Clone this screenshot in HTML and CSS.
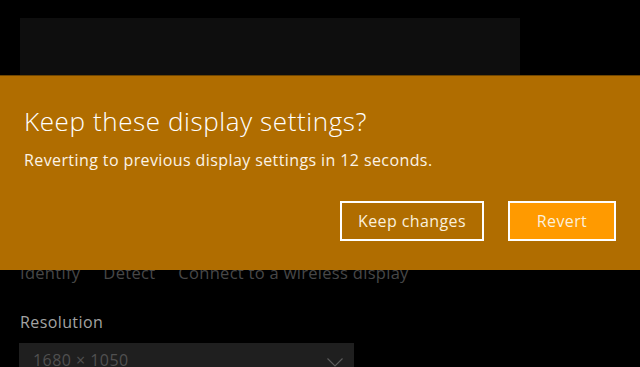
FILE: index.html
```html
<!DOCTYPE html>
<html>
<head>
<meta charset="utf-8">
<link rel="stylesheet" href="styles.css">
</head>
<body>
<div class="page">
  <div class="preview"></div>
  <div class="hidden-area"></div>
  <div class="links">
    <span>Identify</span>
    <span>Detect</span>
    <span>Connect to a wireless display</span>
  </div>
  <div class="label">Resolution</div>
  <div class="select">
    <span class="select-value">1680 × 1050</span>
    <svg class="chev" width="16" height="9" viewBox="0 0 16 9"><path d="M0.5 0.5 L8 8 L15.5 0.5" fill="none" stroke="#5c5c5c" stroke-width="1.1"/></svg>
  </div>
</div>
<div class="banner">
  <h1 class="title">Keep these display settings?</h1>
  <p class="msg">Reverting to previous display settings in 12 seconds.</p>
  <div class="actions">
    <button class="btn btn-keep">Keep changes</button>
    <button class="btn btn-revert">Revert</button>
  </div>
</div>
</body>
</html>
```

FILE: styles.css
```css
html, body {
  margin: 0;
  padding: 0;
  background: #000;
  width: 640px;
  height: 367px;
  overflow: hidden;
  font-family: "Open Sans", "Noto Sans", sans-serif;
}
.page {
  padding: 18px 0 0 20px;
}
.preview {
  width: 500px;
  height: 58px;
  background: #0e0e0e;
}
.hidden-area {
  height: 186px;
}
.links {
  display: flex;
  gap: 23px;
  color: #474747;
  font-size: 16.5px;
  letter-spacing: 0.3px;
  line-height: 22px;
}
.label {
  margin-top: 27px;
  color: #a3a3a3;
  font-size: 16px;
  letter-spacing: 0.4px;
  line-height: 22px;
}
.select {
  margin: 10px 0 0 -1px;
  width: 335px;
  height: 40px;
  background: #1f1f1f;
  display: flex;
  align-items: flex-start;
  justify-content: space-between;
  box-sizing: border-box;
  padding: 6px 11px 0 14px;
  color: #505050;
  font-size: 16px;
  letter-spacing: 0.45px;
  line-height: 22px;
}
.chev {
  margin-top: 9px;
}
.banner {
  position: absolute;
  left: 0;
  top: 75px;
  width: 640px;
  height: 195px;
  box-sizing: border-box;
  background: #b06d00;
  border-top: 1px solid #704600;
  padding: 28px 24px 0 24px;
  color: #fff;
}
.title {
  margin: 0;
  font-weight: 300;
  font-size: 26px;
  letter-spacing: 0.6px;
  line-height: 34px;
}
.msg {
  margin: 11px 0 0 0;
  font-size: 16px;
  letter-spacing: 0.4px;
  line-height: 22px;
  color: #fbf3e6;
}
.actions {
  display: flex;
  justify-content: flex-end;
  gap: 24px;
  margin-top: 30px;
}
.btn {
  font-family: inherit;
  font-size: 16px;
  letter-spacing: 0.4px;
  color: #fbf0dc;
  border: 2px solid #fff;
  height: 40px;
  box-sizing: border-box;
  padding: 0 0 1px 0;
  cursor: pointer;
}
.btn-keep {
  width: 144px;
  background: #b06d00;
}
.btn-revert {
  width: 108px;
  background: #ff9a00;
}
```
